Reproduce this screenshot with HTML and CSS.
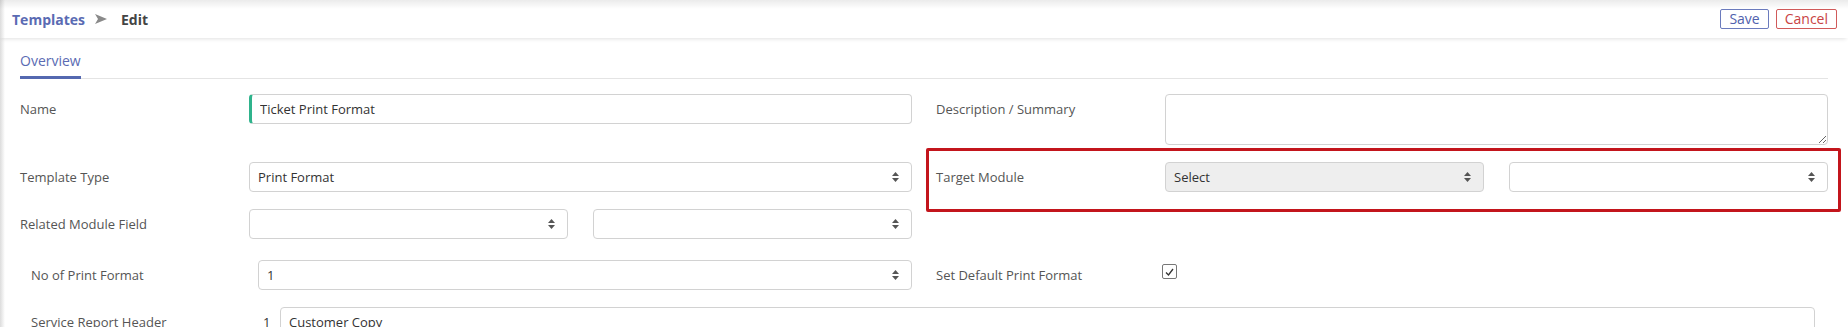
FILE: index.html
```html
<!DOCTYPE html>
<html lang="en">
<head>
    <meta charset="UTF-8">
    <meta name="viewport" content="width=device-width, initial-scale=1.0">
    <title>Templates - Edit</title>
    <link rel="stylesheet" href="styles.css">
</head>
<body>
    <header class="top-bar">
        <nav class="breadcrumb">
            <a href="#" class="crumb-link">Templates</a>
            <svg class="crumb-sep" width="12" height="10" viewBox="0 0 12 10"><polygon points="0,0 12,5 0,10 3,5" fill="#8a8a8a"/></svg>
            <span class="crumb-current">Edit</span>
        </nav>
        <div class="actions">
            <button class="btn btn-save">Save</button>
            <button class="btn btn-cancel">Cancel</button>
        </div>
    </header>

    <main class="content">
        <div class="tabs">
            <a href="#" class="tab active">Overview</a>
        </div>

        <form class="record-form">
            <!-- Name / Description -->
            <div class="form-row">
                <div class="field">
                    <label class="field-label">Name</label>
                    <div class="field-control">
                        <input type="text" class="input input-required" value="Ticket Print Format">
                    </div>
                </div>
                <div class="field">
                    <label class="field-label">Description / Summary</label>
                    <div class="field-control">
                        <textarea class="input textarea"></textarea>
                    </div>
                </div>
            </div>

            <!-- Template Type / Target Module -->
            <div class="form-row">
                <div class="field">
                    <label class="field-label">Template Type</label>
                    <div class="field-control">
                        <div class="select">
                            <span>Print Format</span>
                            <svg class="select-arrow" width="7" height="10" viewBox="0 0 7 10"><polygon points="0,4 3.5,0 7,4"/><polygon points="0,6 3.5,10 7,6"/></svg>
                        </div>
                    </div>
                </div>
                <div class="field highlight">
                    <label class="field-label">Target Module</label>
                    <div class="field-control">
                        <div class="select select-disabled">
                            <span>Select</span>
                            <svg class="select-arrow" width="7" height="10" viewBox="0 0 7 10"><polygon points="0,4 3.5,0 7,4"/><polygon points="0,6 3.5,10 7,6"/></svg>
                        </div>
                        <div class="select">
                            <span></span>
                            <svg class="select-arrow" width="7" height="10" viewBox="0 0 7 10"><polygon points="0,4 3.5,0 7,4"/><polygon points="0,6 3.5,10 7,6"/></svg>
                        </div>
                    </div>
                </div>
            </div>

            <!-- Related Module Field -->
            <div class="form-row row-loose">
                <div class="field">
                    <label class="field-label">Related Module Field</label>
                    <div class="field-control">
                        <div class="select">
                            <span></span>
                            <svg class="select-arrow" width="7" height="10" viewBox="0 0 7 10"><polygon points="0,4 3.5,0 7,4"/><polygon points="0,6 3.5,10 7,6"/></svg>
                        </div>
                        <div class="select">
                            <span></span>
                            <svg class="select-arrow" width="7" height="10" viewBox="0 0 7 10"><polygon points="0,4 3.5,0 7,4"/><polygon points="0,6 3.5,10 7,6"/></svg>
                        </div>
                    </div>
                </div>
                <div class="field"></div>
            </div>

            <!-- Print format settings -->
            <div class="form-row">
                <div class="field indent">
                    <label class="field-label">No of Print Format</label>
                    <div class="field-control">
                        <div class="select">
                            <span>1</span>
                            <svg class="select-arrow" width="7" height="10" viewBox="0 0 7 10"><polygon points="0,4 3.5,0 7,4"/><polygon points="0,6 3.5,10 7,6"/></svg>
                        </div>
                    </div>
                </div>
                <div class="field">
                    <label class="field-label">Set Default Print Format</label>
                    <div class="field-control">
                        <span class="checkbox">
                            <svg width="9" height="8" viewBox="0 0 9 8"><polyline points="1,4.5 3.5,7 8,1" fill="none" stroke="#333" stroke-width="1.3"/></svg>
                        </span>
                    </div>
                </div>
            </div>

            <div class="form-row row-full">
                <div class="field indent">
                    <label class="field-label">Service Report Header</label>
                    <span class="line-index">1</span>
                    <div class="field-control">
                        <input type="text" class="input" value="Customer Copy">
                    </div>
                </div>
            </div>
        </form>
    </main>
</body>
</html>
```

FILE: styles.css
```css
body {
    margin: 0;
    font-family: "Open Sans", Arial, sans-serif;
    font-size: 13px;
    color: #555;
    background: linear-gradient(to right, #dcdcdc, #fff 5px);
    overflow: hidden;
}

/* Top bar with breadcrumb and actions */
.top-bar {
    display: flex;
    justify-content: space-between;
    align-items: center;
    height: 38px;
    padding: 0 11px 0 12px;
    background: linear-gradient(rgba(0, 0, 0, 0.08), rgba(0, 0, 0, 0) 9px);
    box-shadow: 0 3px 4px -2px rgba(0, 0, 0, 0.12);
    box-sizing: border-box;
}

.breadcrumb {
    display: flex;
    align-items: center;
    font-size: 14px;
    font-weight: 700;
}

.crumb-link {
    color: #5a6bb3;
    text-decoration: none;
}

.crumb-sep {
    margin: 0 14px 0 10px;
}

.crumb-current {
    color: #444;
}

.actions {
    display: flex;
    gap: 7px;
}

.btn {
    font-family: inherit;
    font-size: 14px;
    line-height: 18px;
    padding: 0 8px;
    background: #fff;
    border: 1px solid;
    border-radius: 2px;
    cursor: pointer;
}

.btn-save {
    color: #4f61ad;
    border-color: #6b7bbd;
}

.btn-cancel {
    color: #c94343;
    border-color: #d05a5a;
}

/* Content */
.content {
    padding: 0 20px;
}

.tabs {
    display: flex;
    border-bottom: 1px solid #e4e4e4;
}

.tab {
    font-size: 14px;
    line-height: 18px;
    color: #5a6bb3;
    text-decoration: none;
    padding: 14px 0 6px;
    margin-bottom: -1px;
    border-bottom: 3px solid transparent;
}

.tab.active {
    border-bottom-color: #5468b0;
}

.record-form {
    padding-top: 15px;
}

.form-row {
    display: grid;
    grid-template-columns: 1fr 1fr;
    column-gap: 24px;
    margin-bottom: 17px;
}

.form-row.row-loose {
    margin-bottom: 21px;
}

.form-row.row-full {
    grid-template-columns: 1fr;
    padding-right: 13px;
}

.field {
    display: flex;
    align-items: flex-start;
}

.field.indent {
    padding-left: 11px;
}

.field-label {
    flex: none;
    width: 229px;
    line-height: 30px;
}

.field.indent .field-label {
    width: 227px;
}

.field-control {
    flex: 1;
    display: flex;
    align-items: center;
    gap: 25px;
    min-height: 30px;
}

.input {
    width: 100%;
    height: 30px;
    box-sizing: border-box;
    font-family: inherit;
    font-size: 13px;
    color: #333;
    padding: 0 8px;
    border: 1px solid #d2d2d2;
    border-radius: 4px;
    background: #fff;
    outline: none;
}

.input-required {
    border-left: 3px solid #2fb38c;
}

.textarea {
    height: 51px;
    resize: vertical;
    display: block;
}

.select {
    flex: 1;
    display: flex;
    justify-content: space-between;
    align-items: center;
    height: 30px;
    box-sizing: border-box;
    padding: 0 12px 0 8px;
    color: #333;
    border: 1px solid #d2d2d2;
    border-radius: 4px;
    background: #fff;
}

.select-disabled {
    background: #eeeeee;
}

.select-arrow {
    fill: #555;
}

.checkbox {
    display: inline-flex;
    align-items: center;
    justify-content: center;
    width: 15px;
    height: 15px;
    box-sizing: border-box;
    border: 1px solid #777;
    border-radius: 2px;
    margin-left: -3px;
    margin-top: -7px;
}

.line-index {
    flex: none;
    width: 17px;
    padding-left: 5px;
    line-height: 30px;
    color: #333;
}

/* Highlight box around the target module field */
.highlight {
    position: relative;
}

.highlight::after {
    content: "";
    position: absolute;
    left: -10px;
    right: -13px;
    top: -14px;
    bottom: -20px;
    border: 3px solid #c3151c;
    border-radius: 2px;
    pointer-events: none;
}
```
